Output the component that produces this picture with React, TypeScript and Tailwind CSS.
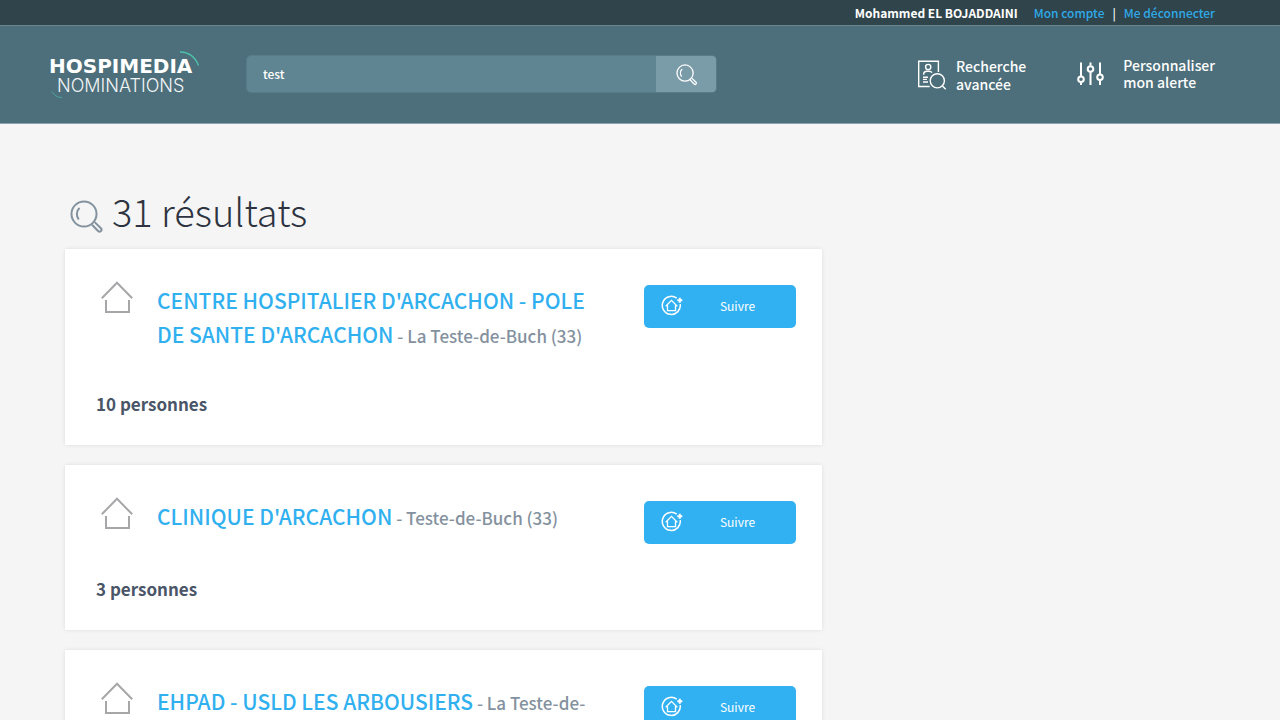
import type { ReactNode } from "react";

type Result = { name: string; city: string; people: number };

const results: Result[] = [
  { name: "CENTRE HOSPITALIER D'ARCACHON - POLE DE SANTE D'ARCACHON", city: "La Teste-de-Buch (33)", people: 10 },
  { name: "CLINIQUE D'ARCACHON", city: "Teste-de-Buch (33)", people: 3 },
  { name: "EHPAD - USLD LES ARBOUSIERS", city: "La Teste-de-Buch (33)", people: 2 },
];

function SearchIcon({ className }: { className: string }) {
  return (
    <svg viewBox="0 0 34 34" className={className} fill="none" stroke="currentColor" strokeWidth="2" aria-hidden="true">
      <circle cx="14" cy="14" r="12.5" />
      <path d="M9 8.5c-2.6 2.6-2.8 7.2-.6 10.3" strokeLinecap="round" />
      <path d="M22.5 25.2l5.6 5.8c.8.8 2 .8 2.8.1.8-.8.8-2 0-2.8L25.2 22.6" strokeLinecap="round" strokeLinejoin="round" />
    </svg>
  );
}

function HouseIcon() {
  return (
    <svg viewBox="0 0 32 34" className="h-[34px] w-8" fill="none" stroke="#a7a7a9" strokeWidth="2" aria-hidden="true">
      <path d="M.8 18.3L16 2.7l15.2 15.6" />
      <path d="M5 20v12h23V20" />
    </svg>
  );
}

function FollowIcon() {
  return (
    <svg viewBox="0 0 22 22" className="h-[22px] w-[22px] shrink-0" fill="none" stroke="currentColor" aria-hidden="true">
      <path d="M15.7 3.2A9 9 0 1 0 19.2 9" strokeWidth="1.5" />
      <path d="M18.8 2.8v5M16.3 5.3h5" strokeWidth="2" />
      <path d="M4.7 11.3L10.5 5.4l5.8 5.9M6.5 10.2v5.5h8v-5.5" strokeWidth="1.3" />
    </svg>
  );
}

function AdvancedIcon() {
  return (
    <svg viewBox="0 0 30 32" className="h-8 w-[30px] shrink-0" fill="none" stroke="currentColor" strokeWidth="1.4" aria-hidden="true">
      <path d="M21.4 13V2.2H1.7v25.3h11" />
      <circle cx="11.2" cy="8" r="2.6" />
      <path d="M6.6 15.8c0-2.2 1.6-3.5 3.4-3.5h2.2c1.2 0 2.2.5 2.8 1.3M6 18.2h5M6 20.4h4M6 23h5" />
      <circle cx="20.3" cy="21.8" r="7.1" />
      <path d="M25.4 27l3.3 3.3" />
    </svg>
  );
}

function AlertIcon() {
  return (
    <svg viewBox="0 0 28 24" className="h-6 w-7 shrink-0" fill="none" stroke="currentColor" strokeWidth="2" aria-hidden="true">
      <path d="M4 .5v14M4 20v3M13.5.5v3M13.5 10v13M23 .5v12M23 18.5V23" />
      <circle cx="4" cy="17.2" r="2.8" />
      <circle cx="13.5" cy="7" r="2.8" />
      <circle cx="23" cy="15.3" r="2.8" />
    </svg>
  );
}

function Logo() {
  return (
    <a href="#" aria-label="Hospimedia Nominations" className="block shrink-0">
      <svg viewBox="0 0 152 50" className="h-[50px] w-[152px]">
        <text x="0" y="24" fill="#fff" fontFamily="DejaVu Sans, sans-serif" fontWeight="700" fontSize="20">HOSPIMEDIA</text>
        <text x="8" y="43" fill="#f2f5f6" fontFamily="Inter, sans-serif" fontWeight="300" fontSize="18">NOMINATIONS</text>
        <path d="M131 3c8-.5 15.5 5 18.5 13.5" fill="none" stroke="#4cc0aa" strokeWidth="1.4" />
        <path d="M3 42.5c2 3.5 5 6 10 6" fill="none" stroke="#4ba99d" strokeWidth="1" />
      </svg>
    </a>
  );
}

function HeaderLink({ icon, gap, children }: { icon: ReactNode; gap: string; children: ReactNode }) {
  return (
    <a href="#" className={`flex items-center text-[14px] font-medium ${gap}`}>
      {icon}
      <span>{children}</span>
    </a>
  );
}

function ResultCard({ result }: { result: Result }) {
  return (
    <li className="bg-white px-[31px] pt-[34px] pb-[26px] shadow-[0_0_4px_rgba(0,0,0,0.1)]">
      <div className="flex items-start">
        <div className="w-[61px] shrink-0 pl-[5px]">
          <div className="-mt-[3px]"><HouseIcon /></div>
        </div>
        <h2 className="min-w-0 flex-1 pb-2 text-[21px] leading-[34px] font-medium">
          <a href="#" className="text-[#31b0f0]">{result.name}</a>
          <span className="text-[17px] leading-none text-[#84919e]"> - {result.city}</span>
        </h2>
        <button type="button" className="mt-[2px] mr-[-5px] ml-10 flex h-[43px] w-[152px] shrink-0 items-center rounded-[5px] bg-[#32b1f2] pb-[2px] pl-[17px] text-[12px] text-white">
          <FollowIcon />
          <span className="flex-1 pr-1 text-center">Suivre</span>
        </button>
      </div>
      <p className="mt-[30px] text-[17px] leading-[30px] font-bold text-[#4a5568]">{result.people} personnes</p>
    </li>
  );
}

export default function App() {
  return (
    <div lang="fr" className="min-h-screen bg-[#f5f5f5] font-['Noto_Sans_CJK_SC','Noto_Sans',sans-serif]">
      <div className="flex h-[26px] items-center justify-end border-b border-[#698590] bg-[#30444b] px-[65px] text-[12px] font-medium text-white">
        <span className="font-bold">Mohammed EL BOJADDAINI</span>
        <a href="#" className="ml-4 text-[#2fa9e8]">Mon compte</a>
        <span className="mx-2">|</span>
        <a href="#" className="text-[#2fa9e8]">Me déconnecter</a>
      </div>
      <header className="flex h-[98px] items-center border-b border-[#8ba3ae] bg-[#4d6f7b] pr-[65px] pb-px pl-[49px] text-white">
        <Logo />
        <form role="search" className="ml-[45px] flex h-[38px] w-[471px] min-w-0 overflow-hidden rounded-[5px] border border-[#587b89] bg-[#5f8593]" onSubmit={(e) => e.preventDefault()}>
          <input type="text" aria-label="Rechercher" defaultValue="test" className="min-w-0 flex-1 bg-transparent px-4 text-[12px] font-medium outline-none" />
          <button type="submit" aria-label="Lancer la recherche" className="flex w-[60px] items-center justify-center bg-[#7a9ca9] pt-[2px] pl-px">
            <SearchIcon className="h-[22px] w-[22px]" />
          </button>
        </form>
        <nav className="ml-auto flex items-center gap-[51px]">
          <HeaderLink icon={<AdvancedIcon />} gap="gap-[9px] pt-[2px] leading-[18px]">Recherche<br />avancée</HeaderLink>
          <HeaderLink icon={<AlertIcon />} gap="gap-[18px] leading-[17px]">Personnaliser<br />mon alerte</HeaderLink>
        </nav>
      </header>
      <main className="px-[65px] pt-[54px] pb-10">
        <h1 className="flex h-[71px] items-start gap-2 pl-[5px] text-[38px] leading-[66px] font-light text-[#2d3340]">
          <SearchIcon className="mt-[22px] h-[34px] w-[34px] text-[#84929f]" />
          31 résultats
        </h1>
        <ul className="flex w-full max-w-[757px] flex-col gap-5">
          {results.map((r) => <ResultCard key={r.name} result={r} />)}
        </ul>
      </main>
    </div>
  );
}
